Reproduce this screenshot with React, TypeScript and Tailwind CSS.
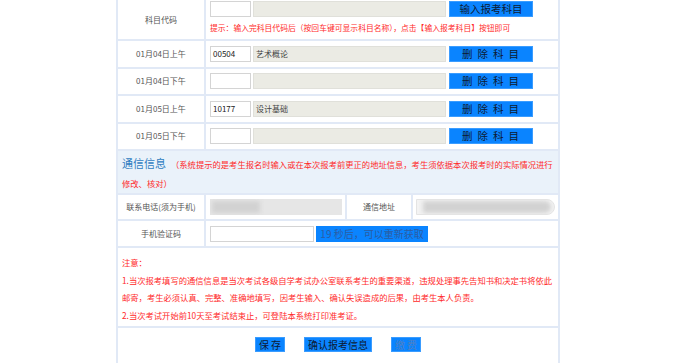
import React from 'react';

const line = 'border-[#e1e9f6]';

type Subject = { label: string; code?: string; name?: string };

const subjects: Subject[] = [
  { label: '01月04日上午', code: '00504', name: '艺术概论' },
  { label: '01月04日下午' },
  { label: '01月05日上午', code: '10177', name: '设计基础' },
  { label: '01月05日下午' },
];

const BlueButton: React.FC<{ children: React.ReactNode; className?: string }> = ({ children, className = '' }) => (
  <div
    className={`h-[16px] bg-[#0a84ff] border border-[#3a9cff] flex items-center justify-center text-[10.5px] leading-none text-[#0d1a33] ${className}`}
  >
    {children}
  </div>
);

const SubjectInputs: React.FC<{ code?: string; name?: string; button: React.ReactNode }> = ({ code, name, button }) => (
  <div className="flex items-center">
    <div className="w-[41px] h-[16px] bg-white border border-[#d4d4d4] text-[8px] leading-[14px] pl-[2px] text-[#222]">
      {code}
    </div>
    <div className="ml-[2px] w-[193px] h-[16px] bg-[#ebebe4] border border-[#e0e0da] text-[8px] leading-[14px] pl-[2px] text-[#444]">
      {name}
    </div>
    <div className="ml-[3px] w-[84px]">{button}</div>
  </div>
);

const Blur: React.FC<{ className?: string }> = ({ className = '' }) => (
  <div className={`bg-[#d2d2d2] blur-[2px] ${className}`} />
);

export default function App() {
  return (
    <div
      className="w-[678px] h-[363px] overflow-hidden bg-white"
      style={{ fontFamily: '"Noto Sans CJK SC", "Noto Sans", sans-serif' }}
    >
      <div className={`ml-[116px] w-[444px] border-x-2 ${line}`}>
        {/* subject code row */}
        <div className={`grid grid-cols-[88px_1fr] h-[41px] border-b-2 ${line}`}>
          <div className={`flex items-center justify-center border-r-2 ${line} text-[8px] text-[#555]`}>科目代码</div>
          <div className="pl-[4px] pt-[1px]">
            <SubjectInputs button={<BlueButton>输入报考科目</BlueButton>} />
            <div className="mt-[5px] text-[7.8px] text-[#ff2a2a] whitespace-nowrap">
              提示：输入完科目代码后（按回车键可显示科目名称），点击【输入报考科目】按钮即可
            </div>
          </div>
        </div>

        {subjects.map((s) => (
          <div key={s.label} className={`grid grid-cols-[88px_1fr] h-[27.5px] border-b-2 ${line}`}>
            <div className={`flex items-center justify-center border-r-2 ${line} text-[8px] text-[#555]`}>{s.label}</div>
            <div className="pl-[4px] flex items-center">
              <SubjectInputs
                code={s.code}
                name={s.name}
                button={<BlueButton className="tracking-[5px] pl-[4px]">删除科目</BlueButton>}
              />
            </div>
          </div>
        ))}

        {/* contact info header */}
        <div className={`h-[44px] bg-[#eaf2fa] border-b-2 ${line} pl-[4px] pt-[4px]`}>
          <div className="flex items-baseline whitespace-nowrap h-[20px]">
            <span className="text-[11px] text-[#2f7dc1] mr-[5px]">通信信息</span>
            <span className="text-[8.3px] text-[#ff2a2a]">
              （系统提示的是考生报名时输入或在本次报考前更正的地址信息，考生须依据本次报考时的实际情况进行
            </span>
          </div>
          <div className="text-[8.3px] leading-[14px] mt-[1px] text-[#ff2a2a]">修改、核对）</div>
        </div>

        {/* phone / address */}
        <div className={`grid grid-cols-[88px_141px_66px_1fr] h-[26px] border-b-2 ${line}`}>
          <div className={`flex items-center justify-center border-r-2 ${line} text-[8px] text-[#555]`}>联系电话(须为手机)</div>
          <div className={`flex items-center pl-[4px] border-r-2 ${line}`}>
            <div className="relative w-[132px] h-[16px] bg-[#e6e6e6] overflow-hidden">
              <Blur className="absolute left-[2px] top-[2px] w-[48px] h-[12px]" />
            </div>
          </div>
          <div className={`flex items-center justify-center border-r-2 ${line} text-[8px] text-[#555]`}>通信地址</div>
          <div className="flex items-center pl-[3px]">
            <div className="relative w-[139px] h-[16px] bg-[#f3f3f3] border border-[#e4e4e4] rounded-r-[8px] overflow-hidden">
              <Blur className="absolute left-[6px] top-[1px] w-[128px] h-[12px] rounded-r-[6px]" />
            </div>
          </div>
        </div>

        {/* verification code */}
        <div className={`grid grid-cols-[88px_1fr] h-[27px] border-b-2 ${line}`}>
          <div className={`flex items-center justify-center border-r-2 ${line} text-[8px] text-[#555]`}>手机验证码</div>
          <div className="flex items-center pl-[4px]">
            <div className="w-[104px] h-[16px] bg-white border border-[#d4d4d4]" />
            <div className="ml-[2px] w-[112px] h-[16px] bg-[#0a84ff] flex items-center justify-center text-[10px] leading-none text-[#2c5da3]">
              19 秒后，可以重新获取
            </div>
          </div>
        </div>

        {/* notice */}
        <div className={`h-[80px] border-b-2 ${line} pl-[4px] pt-[6px] text-[8.3px] leading-[17.6px] text-[#ff2a2a]`}>
          <div>注意：</div>
          <div>1.当次报考填写的通信信息是当次考试各级自学考试办公室联系考生的重要渠道，违规处理事先告知书和决定书将依此</div>
          <div>邮寄，考生必须认真、完整、准确地填写，因考生输入、确认失误造成的后果，由考生本人负责。</div>
          <div>2.当次考试开始前10天至考试结束止，可登陆本系统打印准考证。</div>
        </div>

        {/* action buttons */}
        <div className="h-[40px] flex justify-center items-start pt-[9px]">
          <div className="w-[30px] h-[15px] bg-[#0a84ff] border border-[#3a9cff] flex items-center justify-center text-[10px] leading-none text-[#0d1a33] tracking-[2px] pl-[2px]">
            保存
          </div>
          <div className="ml-[19px] w-[68px] h-[15px] bg-[#0a84ff] border border-[#3a9cff] flex items-center justify-center text-[10px] leading-none text-[#0d1a33]">
            确认报考信息
          </div>
          <div className="ml-[19px] w-[30px] h-[15px] bg-[#0a84ff] border border-[#3a9cff] flex items-center justify-center text-[10px] leading-none text-[#4f80c4] tracking-[2px] pl-[2px]">
            缴费
          </div>
        </div>
      </div>
    </div>
  );
}
